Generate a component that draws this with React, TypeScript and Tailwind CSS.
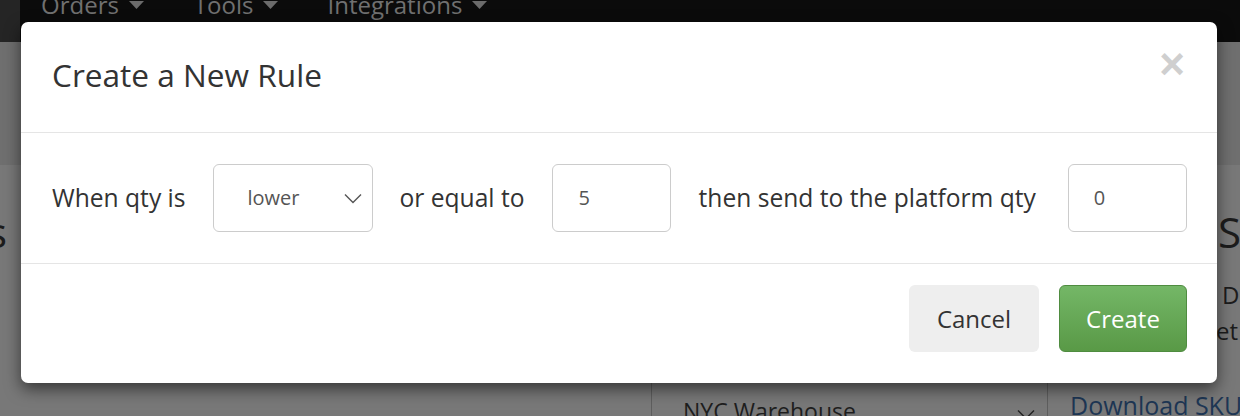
import React from "react";

const font = { fontFamily: "'Open Sans', 'Noto Sans', 'Liberation Sans', sans-serif" };

function Caret({ className = "" }: { className?: string }) {
  return (
    <svg width="15" height="9" viewBox="0 0 15 9" className={className}>
      <path d="M0 0 L15 0 L7.5 8 Z" fill="#6b6b6b" />
    </svg>
  );
}

function Chevron({ color = "#555" }: { color?: string }) {
  return (
    <svg width="18" height="11" viewBox="0 0 18 11">
      <path d="M1 1.5 L9 9.5 L17 1.5" fill="none" stroke={color} strokeWidth="1.4" />
    </svg>
  );
}

export default function App() {
  return (
    <div className="relative w-[1240px] h-[416px] overflow-hidden bg-[#787878]" style={font}>
      {/* background page (dimmed) */}
      <div className="flex h-[42px] bg-[#0b0b0b]">
        <div className="w-[20px] shrink-0 bg-[#252525]" />
        <div className="flex items-start -mt-[11px] pl-[21px] text-[24px] leading-[32px] text-[#707070]">
          <span className="flex items-center gap-[10px]">Orders <Caret /></span>
          <span className="flex items-center gap-[10px] ml-[50px]">Tools <Caret /></span>
          <span className="flex items-center gap-[10px] ml-[49px]">Integrations <Caret /></span>
        </div>
      </div>
      <div className="h-[123px] bg-[#6f6f6f]" />
      <div className="flex h-[251px]">
        <div className="w-[651px] shrink-0 pt-[46px]">
          <div className="-ml-[13px] text-[42px] leading-none text-[#1c1c1c]">s</div>
        </div>
        <div className="w-[397px] shrink-0 flex flex-col justify-end">
          <div className="h-[48px] border-l border-t border-r border-[#5e5e5e] flex items-end justify-between pl-[31px] pr-[12px] text-[23px] text-[#1e1e1e]">
            <span className="-mb-[12px]">NYC Warehouse</span>
            <span className="mb-[-4px]"><Chevron color="#222" /></span>
          </div>
        </div>
        <div className="flex-1 min-w-0 overflow-hidden flex flex-col pl-[22px] whitespace-nowrap">
          <div className="ml-[148px] mt-[46px] text-[42px] leading-none text-[#1c1c1c]">SI</div>
          <div className="ml-[152px] mt-[30px] text-[24px] leading-none text-[#1c1c1c]">D</div>
          <div className="ml-[146px] mt-[12px] text-[24px] leading-none text-[#1c1c1c]">et</div>
          <div className="mt-[50px] text-[25px] leading-none text-[#1d3654]">Download SKU</div>
        </div>
      </div>

      {/* modal */}
      <div className="absolute left-[21px] top-[22px] w-[1196px] h-[361px] bg-white rounded-[7px] shadow-[0_6px_16px_rgba(0,0,0,0.55)] flex flex-col text-[#333]">
        <div className="h-[111px] border-b border-[#e5e5e5] flex items-start justify-between pl-[31px] pr-[32px]">
          <h4 className="mt-[33px] text-[31.6px] leading-[40px] text-[#333]">Create a New Rule</h4>
          <span
            className="mt-[20px] text-[44px] leading-[44px] font-bold text-[#cfcfcf]"
            style={{ fontFamily: "'Liberation Sans', Arial, sans-serif" }}
          >
            ×
          </span>
        </div>
        <div className="h-[131px] border-b border-[#e5e5e5] flex items-center pl-[31px] text-[24.6px]">
          <span>When qty is</span>
          <div className="ml-[27px] w-[160px] h-[68px] shrink-0 rounded-[6px] border border-[#ccc] flex items-center justify-between pl-[34px] pr-[10px] text-[20px] text-[#555]">
            <span>lower</span>
            <Chevron />
          </div>
          <span className="ml-[27px]">or equal to</span>
          <div className="ml-[27px] w-[119px] h-[68px] shrink-0 rounded-[6px] border border-[#ccc] flex items-center pl-[26px] text-[20px] text-[#555]">5</div>
          <span className="ml-[28px]">then send to the platform qty</span>
          <div className="ml-[32px] w-[119px] h-[68px] shrink-0 rounded-[6px] border border-[#ccc] flex items-center pl-[25px] text-[20px] text-[#555]">0</div>
        </div>
        <div className="flex-1 flex items-start justify-end gap-[20px] pt-[21px] pr-[30px]">
          <button className="w-[130px] h-[67px] rounded-[6px] bg-[#eeeeee] text-[24px] text-[#333]">Cancel</button>
          <button className="w-[128px] h-[67px] rounded-[6px] border border-[#4f8c40] bg-gradient-to-b from-[#74b767] to-[#599946] text-[24px] text-white">Create</button>
        </div>
      </div>
    </div>
  );
}
